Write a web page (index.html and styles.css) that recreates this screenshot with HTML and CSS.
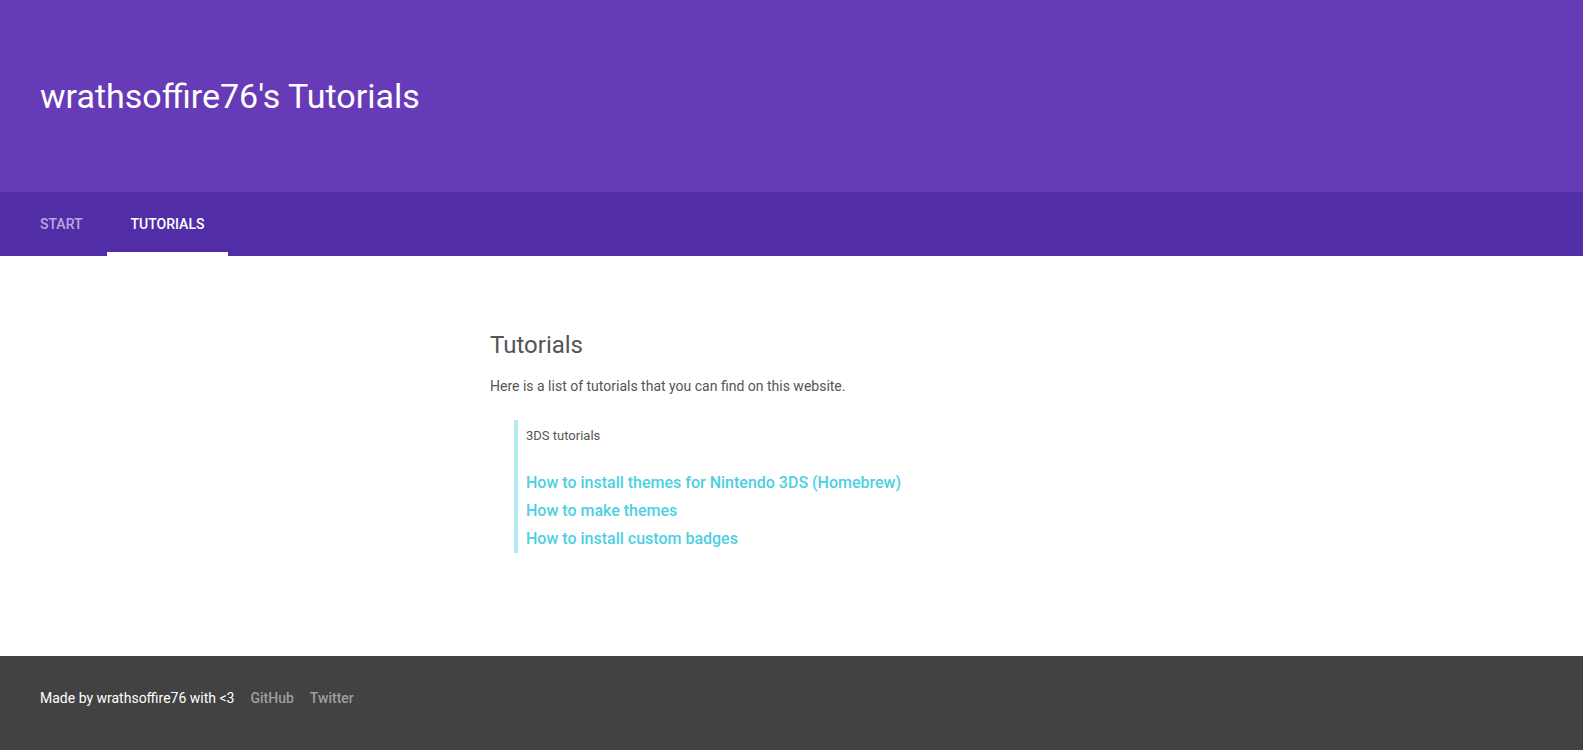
FILE: index.html
```html
<!DOCTYPE html>
<html lang="en">
<head>
<meta charset="utf-8">
<title>wrathsoffire76's Tutorials</title>
<link rel="stylesheet" href="styles.css">
</head>
<body>
<div class="layout">
  <header class="header">
    <div class="header-row">
      <span class="title">wrathsoffire76's Tutorials</span>
    </div>
    <nav class="tab-bar">
      <a class="tab" href="#">Start</a>
      <a class="tab is-active" href="#">Tutorials</a>
    </nav>
  </header>
  <main class="content">
    <div class="page">
      <h2 class="page-title">Tutorials</h2>
      <p class="intro">Here is a list of tutorials that you can find on this website.</p>
      <blockquote class="group">
        <div class="group-label">3DS tutorials</div>
        <ul class="links">
          <li><a href="#">How to install themes for Nintendo 3DS (Homebrew)</a></li>
          <li><a href="#">How to make themes</a></li>
          <li><a href="#">How to install custom badges</a></li>
        </ul>
      </blockquote>
    </div>
  </main>
  <footer class="footer">
    <span class="made">Made by wrathsoffire76 with &lt;3</span>
    <a class="foot-link" href="#">GitHub</a>
    <a class="foot-link" href="#">Twitter</a>
  </footer>
</div>
</body>
</html>
```
FILE: styles.css
```css
* { box-sizing: border-box; }
html, body { margin: 0; padding: 0; }
body {
  font-family: Roboto, "Helvetica Neue", Arial, sans-serif;
  color: #555;
  background: #fff;
}
a { text-decoration: none; }

.layout {
  display: flex;
  flex-direction: column;
  min-height: 100vh;
}

.header { background: #673ab7; color: #fff; }
.header-row {
  height: 192px;
  display: flex;
  align-items: center;
  padding: 0 40px;
}
.title {
  font-size: 34px;
  font-weight: 400;
  line-height: 40px;
}

.tab-bar {
  background: #512da8;
  height: 64px;
  display: flex;
  padding-left: 16px;
}
.tab {
  display: flex;
  align-items: center;
  padding: 0 24px;
  font-size: 14px;
  font-weight: 500;
  text-transform: uppercase;
  color: rgba(255, 255, 255, 0.6);
  border-bottom: 4px solid transparent;
  padding-top: 4px;
}
.tab.is-active {
  color: #fff;
  border-bottom-color: #fff;
}

.content {
  flex: 1;
  display: flex;
  justify-content: center;
}
.page {
  width: 603px;
  padding-top: 73px;
}
.page-title {
  margin: 0;
  font-size: 24px;
  font-weight: 400;
  line-height: 32px;
  color: #555;
}
.intro {
  margin: 15px 0 0;
  font-size: 14px;
  line-height: 20px;
}
.group {
  margin: 24px 0 0 24px;
  padding: 6px 0 0 8px;
  border-left: 4px solid #b2ebf2;
}
.group-label {
  font-size: 13px;
  line-height: 20px;
  color: #555;
}
.links {
  list-style: none;
  margin: 23px 0 0;
  padding: 0;
}
.links li {
  font-size: 16px;
  line-height: 28px;
}
.links a {
  color: #4dd0e1;
  font-weight: 500;
}

.footer {
  background: #424242;
  padding: 32px 40px 42px;
  display: flex;
  gap: 16px;
  font-size: 14px;
  line-height: 20px;
}
.made { color: #fff; }
.foot-link { color: #9e9e9e; font-weight: 500; }
```
